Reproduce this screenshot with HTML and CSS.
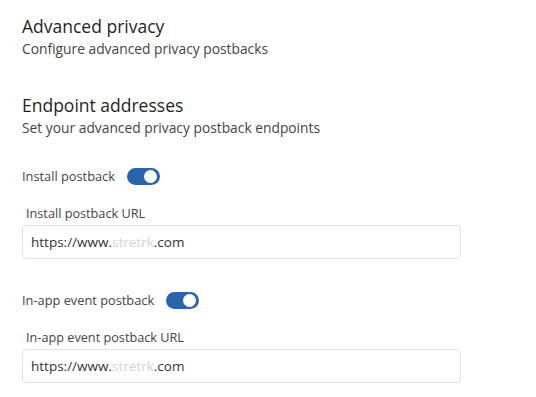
FILE: index.html
```html
<html>

<head>
  <link rel="stylesheet" href="styles.css">
</head>

<body>
  <div class="settings">

    <div class="section section-top">
      <div class="section-title">Advanced privacy</div>
      <div class="section-desc">Configure advanced privacy postbacks</div>
    </div>

    <div class="section">
      <div class="section-title">Endpoint addresses</div>
      <div class="section-desc">Set your advanced privacy postback endpoints</div>
    </div>

    <div class="postback">
      <div class="postback-toggle">
        <span class="postback-label">Install postback</span>
        <span class="switch" data-on="true"><span class="switch-knob"></span></span>
      </div>
      <div class="field-label">Install postback URL</div>
      <div class="field-input">https://www.<span class="masked">stretrk</span>.com</div>
    </div>

    <div class="postback">
      <div class="postback-toggle">
        <span class="postback-label">In-app event postback</span>
        <span class="switch" data-on="true"><span class="switch-knob"></span></span>
      </div>
      <div class="field-label">In-app event postback URL</div>
      <div class="field-input">https://www.<span class="masked">stretrk</span>.com</div>
    </div>

  </div>
</body>

</html>
```

FILE: styles.css
```css
* {
  margin: 0;
  padding: 0;
  box-sizing: border-box;
}

body {
  font-family: "Open Sans", sans-serif;
  background-color: #fff;
  color: #333;
}

.settings {
  padding: 15px 0 0 22px;
  width: 461px;
}

.section {
  margin-bottom: 30px;
}

.section-top {
  margin-bottom: 36px;
}

.section-title {
  font-size: 17.5px;
  font-weight: 500;
  color: #1f1f1f;
  line-height: 22px;
}

.section-desc {
  font-size: 13.8px;
  color: #444;
  line-height: 18px;
  margin-top: 3px;
}

.postback {
  margin-bottom: 32px;
}

.postback-toggle {
  display: flex;
  align-items: center;
  gap: 12px;
  height: 18px;
}

.postback-label {
  font-size: 12.8px;
  color: #444;
}

.switch {
  position: relative;
  display: inline-block;
  width: 33px;
  height: 17px;
  border-radius: 9px;
  background-color: #2a64ad;
}

.switch-knob {
  position: absolute;
  top: 2px;
  right: 3px;
  width: 13px;
  height: 13px;
  border-radius: 50%;
  background-color: #fff;
}

.field-label {
  font-size: 12.7px;
  color: #444;
  margin: 20px 0 4px 4px;
  line-height: 16px;
}

.field-input {
  height: 34px;
  border: 1px solid #e2e2e2;
  border-radius: 4px;
  padding: 0 8px;
  font-size: 13.5px;
  line-height: 32px;
  color: #333;
}

.masked {
  color: #d4d4d4;
}
```
